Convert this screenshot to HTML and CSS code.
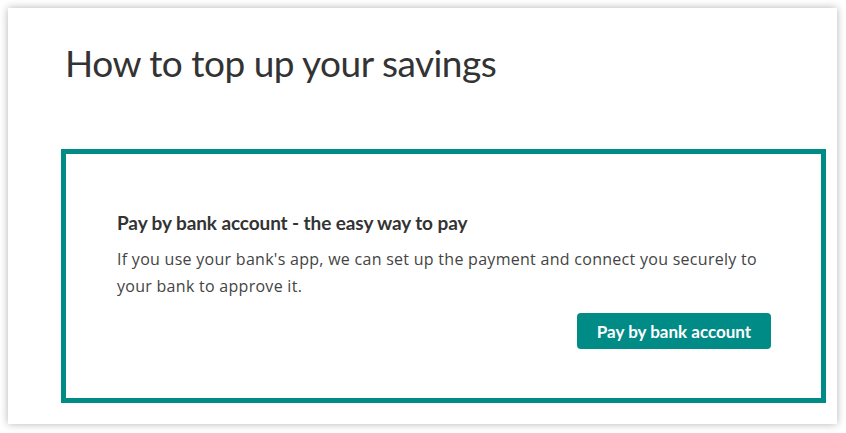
FILE: index.html
```html
<!DOCTYPE html>
<html lang="en">
<head>
    <meta charset="UTF-8">
    <meta name="viewport" content="width=device-width, initial-scale=1.0">
    <title>How to top up your savings</title>
    <link rel="stylesheet" href="styles.css">
</head>
<body>
    <div class="panel">
        <h1>How to top up your savings</h1>
        <div class="option">
            <h3>Pay by bank account - the easy way to pay</h3>
            <p>If you use your bank's app, we can set up the payment and connect you securely to your bank to approve it.</p>
            <div class="actions">
                <button type="button">Pay by bank account</button>
            </div>
        </div>
    </div>
</body>
</html>
```

FILE: styles.css
```css
body {
    margin: 0;
    padding: 8px 9px 9px 8px;
    background-color: #fff;
    font-family: "Open Sans", "Liberation Sans", sans-serif;
}
.panel {
    background-color: white;
    height: 416px;
    box-sizing: border-box;
    padding: 33px 11px 0 53px;
    box-shadow: 0 0 8px rgba(0,0,0,0.3);
}
h1 {
    margin: 0 0 64px 4px;
    font-family: Lato, sans-serif;
    font-weight: 400;
    font-size: 37px;
    line-height: 44px;
    letter-spacing: -0.5px;
    color: #333;
}
.option {
    border: 5px solid #008b87;
    padding: 57px 50px 49px 51px;
}
h3 {
    margin: 0 0 11px;
    font-family: Lato, sans-serif;
    font-weight: 700;
    font-size: 19px;
    line-height: 24px;
    letter-spacing: -0.1px;
    color: #333;
}
p {
    margin: 0;
    font-size: 16px;
    line-height: 27px;
    letter-spacing: 0.28px;
    color: #444;
}
.actions {
    display: flex;
    justify-content: flex-end;
    margin-top: 13px;
}
button {
    background-color: #008b87;
    color: white;
    border: none;
    border-radius: 4px;
    width: 194px;
    height: 36px;
    font-family: Lato, sans-serif;
    font-weight: 700;
    font-size: 17px;
    cursor: pointer;
}
```
